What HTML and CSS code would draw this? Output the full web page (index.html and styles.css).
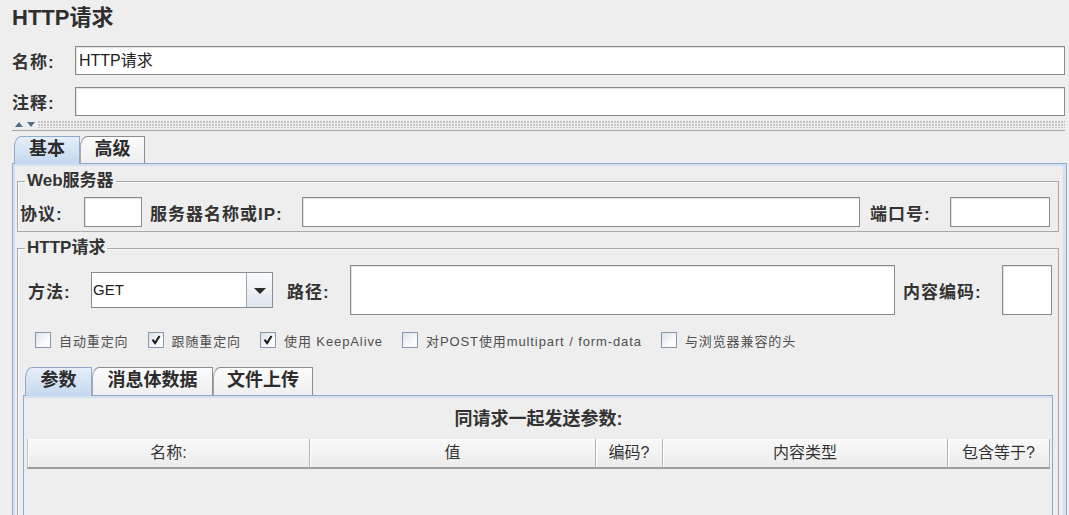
FILE: index.html
```html
<!DOCTYPE html>
<html lang="zh-CN">
<head>
  <meta charset="UTF-8" />
  <title>HTTP请求</title>
  <link rel="stylesheet" href="styles.css">
</head>
<body>
  <div class="sampler">
    <h1 class="sampler-title">HTTP请求</h1>

    <div class="prop-row">
      <span class="lbl name-lbl">名称:</span>
      <div class="text-box">HTTP请求</div>
    </div>
    <div class="prop-row">
      <span class="lbl name-lbl">注释:</span>
      <div class="text-box"></div>
    </div>

    <div class="splitter">
      <span class="arrow-up"></span>
      <span class="arrow-down"></span>
      <span class="dots"></span>
    </div>

    <div class="tabs">
      <div class="tab active" style="width: 66px">基本</div>
      <div class="tab" style="width: 65px">高级</div>
    </div>

    <div class="tab-panel">
      <fieldset class="group">
        <legend>Web服务器</legend>
        <div class="server-row">
          <span class="lbl" style="width: 64px">协议:</span>
          <div class="text-box fixed" style="width: 58px"></div>
          <span class="lbl" style="width: 152px; margin-left: 8px">服务器名称或IP:</span>
          <div class="text-box"></div>
          <span class="lbl" style="width: 80px; margin-left: 10px">端口号:</span>
          <div class="text-box fixed" style="width: 100px"></div>
        </div>
      </fieldset>

      <fieldset class="group http">
        <legend>HTTP请求</legend>
        <div class="request-row">
          <span class="lbl" style="width: 63px">方法:</span>
          <div class="combo">
            <span class="combo-value">GET</span>
            <span class="combo-btn"><span class="combo-arrow"></span></span>
          </div>
          <span class="lbl" style="width: 63px; margin-left: 14px">路径:</span>
          <div class="text-box tall"></div>
          <span class="lbl" style="width: 99px; margin-left: 8px">内容编码:</span>
          <div class="text-box tall fixed" style="width: 50px"></div>
        </div>

        <div class="check-row">
          <label class="check"><span class="box"></span>自动重定向</label>
          <label class="check"><span class="box"><svg viewBox="0 0 16 16"><path d="M4 7.5 L7 11.5 L12 3.5"/></svg></span>跟随重定向</label>
          <label class="check"><span class="box"><svg viewBox="0 0 16 16"><path d="M4 7.5 L7 11.5 L12 3.5"/></svg></span>使用 KeepAlive</label>
          <label class="check"><span class="box"></span>对POST使用multipart / form-data</label>
          <label class="check"><span class="box"></span>与浏览器兼容的头</label>
        </div>

        <div class="tabs inner-tabs">
          <div class="tab active" style="width: 67px">参数</div>
          <div class="tab" style="width: 121px">消息体数据</div>
          <div class="tab" style="width: 100px">文件上传</div>
        </div>

        <div class="args-panel">
          <div class="args-caption">同请求一起发送参数:</div>
          <div class="args-head">
            <div class="col">名称:</div>
            <div class="col">值</div>
            <div class="col">编码?</div>
            <div class="col">内容类型</div>
            <div class="col">包含等于?</div>
          </div>
        </div>
      </fieldset>
    </div>
  </div>
</body>
</html>
```

FILE: styles.css
```css
* {
  box-sizing: border-box;
}
body {
  margin: 0;
  height: 515px;
  overflow: hidden;
  background: #eeeeee;
  color: #333;
  font-family: "Liberation Sans", "Noto Sans CJK SC", sans-serif;
}
.sampler {
  height: 515px;
  overflow: hidden;
  padding: 0 4px 0 12px;
}
.sampler-title {
  margin: 0;
  height: 46px;
  padding-top: 5px;
  font-size: 22px;
  line-height: 26px;
  font-weight: 700;
  color: #2e2e2e;
}

/* name / comment */
.prop-row {
  display: flex;
  align-items: center;
  height: 29px;
}
.prop-row + .prop-row {
  margin-top: 12px;
}
.lbl {
  flex: none;
  font-size: 17px;
  letter-spacing: 1px;
  font-weight: 700;
  white-space: nowrap;
  color: #333;
}
.name-lbl {
  width: 63px;
}
.text-box {
  flex: 1;
  height: 100%;
  min-width: 0;
  border: 1px solid #8b8b8b;
  box-shadow: inset 1px 1px 0 #e2e2e2;
  background: #fff;
  padding: 0 3px;
  font-size: 16px;
  line-height: 27px;
  color: #222;
}
.text-box.fixed {
  flex: none;
}
.text-box.tall {
  height: 50px;
}

/* split pane divider */
.splitter {
  display: flex;
  align-items: flex-start;
  height: 12px;
  margin-top: 3px;
  padding: 2px 0 0 3px;
  border-bottom: 1px solid #a6a6a6;
}
.arrow-up,
.arrow-down {
  flex: none;
  width: 0;
  height: 0;
  margin-top: 1px;
  border-left: 4px solid transparent;
  border-right: 4px solid transparent;
}
.arrow-up {
  border-bottom: 5px solid #4f6d8d;
}
.arrow-down {
  margin-left: 4px;
  border-top: 5px solid #4f6d8d;
}
.dots {
  flex: 1;
  height: 7px;
  margin-left: 3px;
  background-image: radial-gradient(circle at 1px 1px, #c6c6c6 0.8px, transparent 1.2px);
  background-size: 3px 3px;
}

/* tabs */
.tabs {
  display: flex;
  height: 27px;
  margin-top: 5px;
  padding-left: 2px;
}
.tab {
  flex: none;
  height: 100%;
  border: 1px solid #8d8d8d;
  border-bottom: none;
  border-left-color: #a8a8a8;
  border-top-left-radius: 7px 11px;
  background: linear-gradient(#fbfbfb, #efefef);
  font-size: 18px;
  font-weight: 700;
  line-height: 25px;
  text-align: center;
  color: #2c2c2c;
}
.tab.active {
  border-color: #8fa9cd;
  background: linear-gradient(#e6eef9, #c5d8ef);
  position: relative;
  z-index: 1;
  height: 28px;
}
.tab-panel {
  height: 352px;
  overflow: hidden;
  margin-right: -2px;
  padding: 8px 7px 0 4px;
  border: 1px solid #8fa9cd;
  border-bottom: none;
  box-shadow: inset 2px 2px 0 #d2e0f2, inset -3px 0 0 #d2e0f2;
}

/* titled groups */
.group {
  margin: 0;
  min-width: 0;
  padding: 7px 5px 4px 2px;
  border: 1px solid #a9a9a9;
  box-shadow: inset 1px 1px 0 #fafafa;
}
.group legend {
  margin-left: 5px;
  padding: 0 2px;
  font-size: 17px;
  font-weight: 700;
  line-height: 18px;
  color: #333;
}
.group.http {
  margin-top: 7px;
  padding-top: 8px;
  height: 320px;
}
.server-row {
  display: flex;
  align-items: center;
  height: 30px;
  padding-right: 3px;
}
.request-row {
  display: flex;
  align-items: center;
  height: 50px;
  padding-left: 8px;
  margin-right: 1px;
}

/* combo box */
.combo {
  flex: none;
  display: flex;
  width: 182px;
  height: 36px;
  border: 1px solid #8b8b8b;
  background: #fff;
}
.combo-value {
  flex: 1;
  padding-left: 1px;
  font-size: 15px;
  line-height: 34px;
  color: #222;
}
.combo-btn {
  flex: none;
  display: flex;
  align-items: center;
  justify-content: center;
  width: 26px;
  border-left: 1px solid #9aa6b4;
  background: linear-gradient(#fbfcfd, #dde4ec);
}
.combo-arrow {
  width: 0;
  height: 0;
  margin-top: 1px;
  border-left: 6px solid transparent;
  border-right: 6px solid transparent;
  border-top: 6px solid #2a2a2a;
}

/* check boxes */
.check-row {
  display: flex;
  align-items: center;
  height: 16px;
  margin-top: 17px;
  padding-left: 15px;
}
.check {
  display: flex;
  align-items: center;
  margin-right: 19px;
  font-size: 13px;
  letter-spacing: 0.9px;
  color: #4f4f4f;
  white-space: nowrap;
}
.box {
  flex: none;
  width: 16px;
  height: 16px;
  margin-right: 8px;
  border: 1px solid #8797ab;
  background: linear-gradient(135deg, #d9e1ea, #fdfdfe 70%);
}
.box svg {
  display: block;
  width: 14px;
  height: 14px;
}
.box path {
  fill: none;
  stroke: #1e1e1e;
  stroke-width: 2.4;
}

/* parameters panel */
.inner-tabs {
  margin-top: 19px;
  margin-left: 3px;
  height: 28px;
}
.inner-tabs .tab.active {
  height: 29px;
}
.args-panel {
  height: 140px;
  margin-left: 3px;
  padding: 0 2px 0 3px;
  border: 1px solid #8fa9cd;
  border-bottom: none;
  box-shadow: inset 0 2px 0 #d2e0f2;
}
.args-caption {
  height: 43px;
  padding-top: 13px;
  font-size: 18px;
  font-weight: 700;
  line-height: 20px;
  text-align: center;
  color: #333;
}
.args-head {
  display: grid;
  grid-template-columns: 283px 286px 67px 285px 1fr;
  height: 30px;
}
.col {
  border-right: 1px solid #b3b3b3;
  border-bottom: 2px solid #9c9c9c;
  box-shadow: inset 1px 1px 0 #ffffff;
  background: linear-gradient(#f9f9f9, #ebebeb);
  font-size: 16px;
  line-height: 28px;
  text-align: center;
  color: #333;
}
.col:first-child {
  border-left: 1px solid #c4c4c4;
}
```
